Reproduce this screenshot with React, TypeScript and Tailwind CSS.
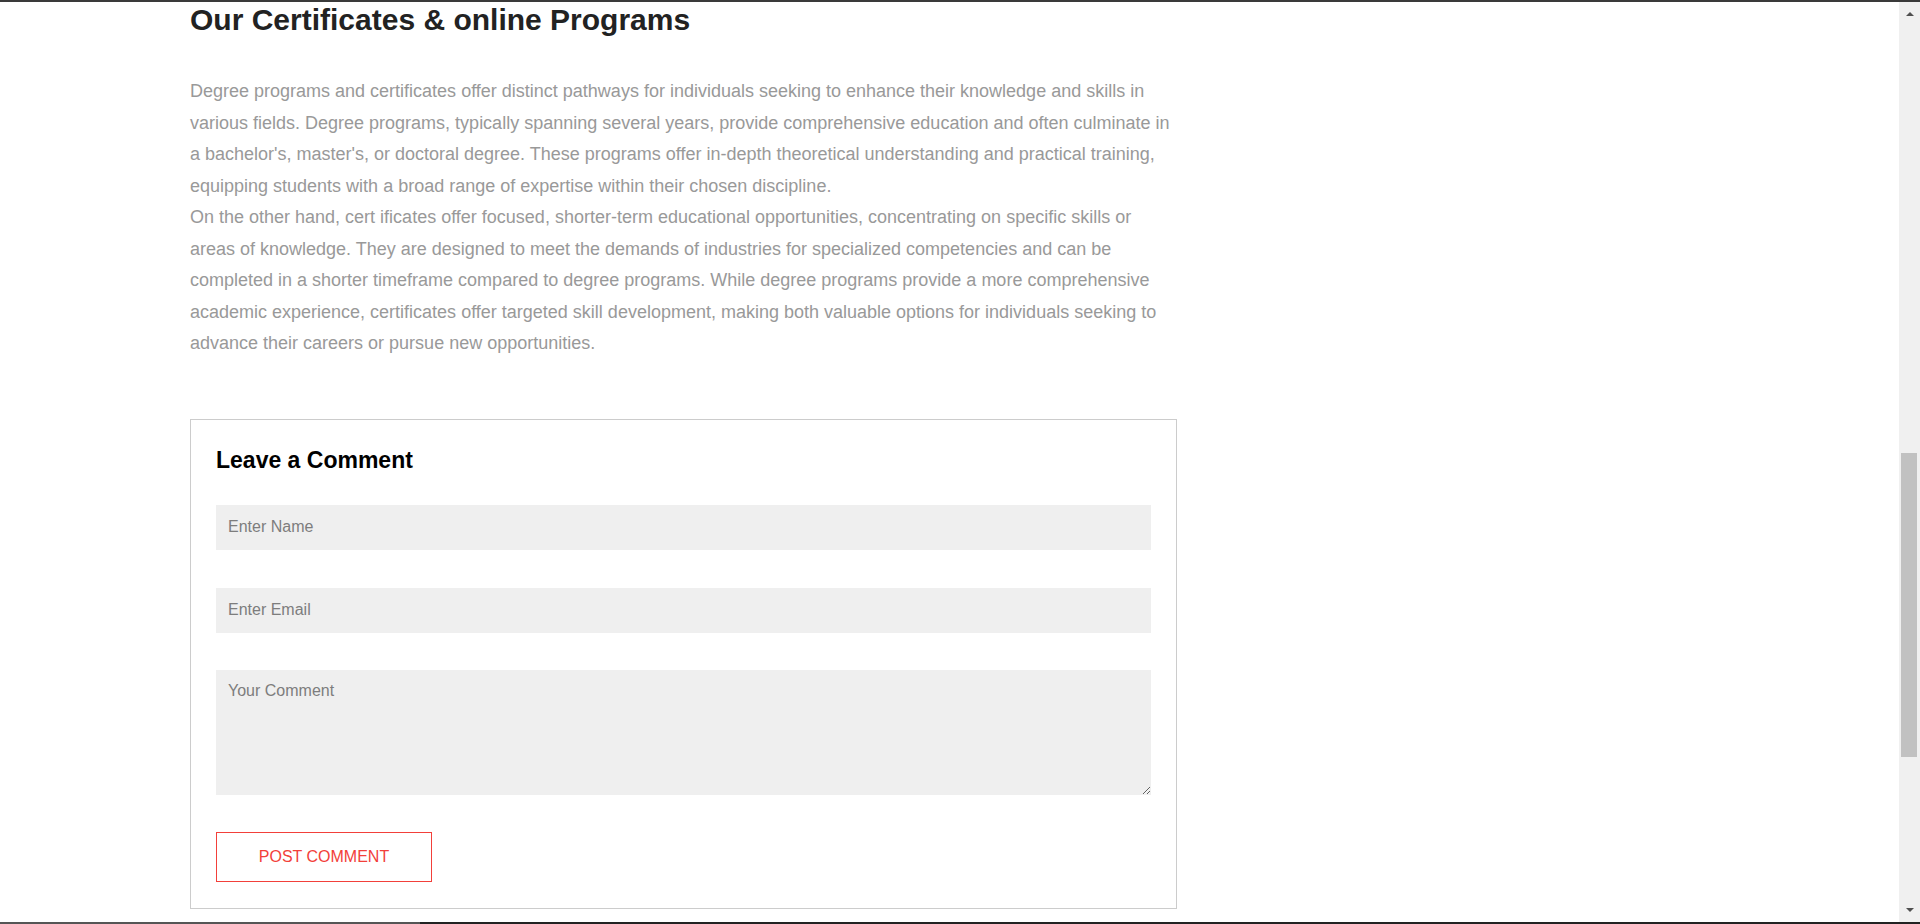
import React from "react";

const font = { fontFamily: '"Liberation Sans", Arial, Helvetica, sans-serif' };

function CommentForm() {
  return (
    <form
      className="border border-[#cccccc] px-[25px] pt-[25px] pb-[26px]"
      onSubmit={(e) => e.preventDefault()}
    >
      <h3 className="mt-[2px] mb-[32px] text-[23px] leading-[26px] font-bold text-black">
        Leave a Comment
      </h3>
      <input
        type="text"
        placeholder="Enter Name"
        className="block w-full h-[45px] px-3 bg-[#efefef] text-[16px] text-[#555] placeholder:text-[#7d7d7d] outline-none"
      />
      <input
        type="email"
        placeholder="Enter Email"
        className="block w-full h-[45px] mt-[38px] px-3 bg-[#efefef] text-[16px] text-[#555] placeholder:text-[#7d7d7d] outline-none"
      />
      <textarea
        placeholder="Your Comment"
        className="block w-full h-[125px] mt-[37px] px-3 pt-3 bg-[#efefef] text-[16px] leading-[18px] text-[#555] placeholder:text-[#7d7d7d] outline-none"
      />
      <button
        type="submit"
        className="block mt-[37px] w-[216px] h-[50px] border border-[#f2403a] bg-white text-[16px] text-[#f2403a] uppercase"
      >
        Post Comment
      </button>
    </form>
  );
}

function Scrollbar() {
  return (
    <div className="w-[21px] h-full bg-[#f0f0f0] flex flex-col items-center">
      <div className="h-[14px] flex items-end justify-center">
        <div className="w-0 h-0 border-l-[4px] border-r-[4px] border-b-[4px] border-l-transparent border-r-transparent border-b-[#505050]" />
      </div>
      <div className="flex-1 w-full pl-[2px] pr-[3px] pt-[437px]">
        <div className="h-[304px] w-full bg-[#c1c1c1]" />
      </div>
      <div className="h-[14px] flex items-start justify-center">
        <div className="w-0 h-0 border-l-[4px] border-r-[4px] border-t-[4px] border-l-transparent border-r-transparent border-t-[#505050]" />
      </div>
    </div>
  );
}

export default function App() {
  return (
    <div className="w-[1920px] h-[924px] overflow-hidden bg-white flex flex-col" style={font}>
      <div className="h-[2px] bg-[#3a3a3a] shrink-0" />
      <div className="flex flex-1 min-h-0">
        <main className="flex-1 pl-[190px]">
          <div className="w-[987px]">
            <h2 className="text-[30px] leading-[36px] font-bold text-[#222]">
              Our Certificates &amp; online Programs
            </h2>
            <p className="mt-[38px] text-[18px] leading-[31.5px] text-[#999]">
              Degree programs and certificates offer distinct pathways for individuals seeking to enhance their knowledge and skills in various fields. Degree programs, typically spanning several years, provide comprehensive education and often culminate in a bachelor's, master's, or doctoral degree. These programs offer in-depth theoretical understanding and practical training, equipping students with a broad range of expertise within their chosen discipline.
              <br />
              On the other hand, cert ificates offer focused, shorter-term educational opportunities, concentrating on specific skills or areas of knowledge. They are designed to meet the demands of industries for specialized competencies and can be completed in a shorter timeframe compared to degree programs. While degree programs provide a more comprehensive academic experience, certificates offer targeted skill development, making both valuable options for individuals seeking to advance their careers or pursue new opportunities.
            </p>
            <div className="mt-[59px]">
              <CommentForm />
            </div>
          </div>
        </main>
        <Scrollbar />
      </div>
      <div className="h-[2px] shrink-0 flex">
        <div className="w-[420px] bg-[#555]" />
        <div className="flex-1 bg-[#222]" />
      </div>
    </div>
  );
}
